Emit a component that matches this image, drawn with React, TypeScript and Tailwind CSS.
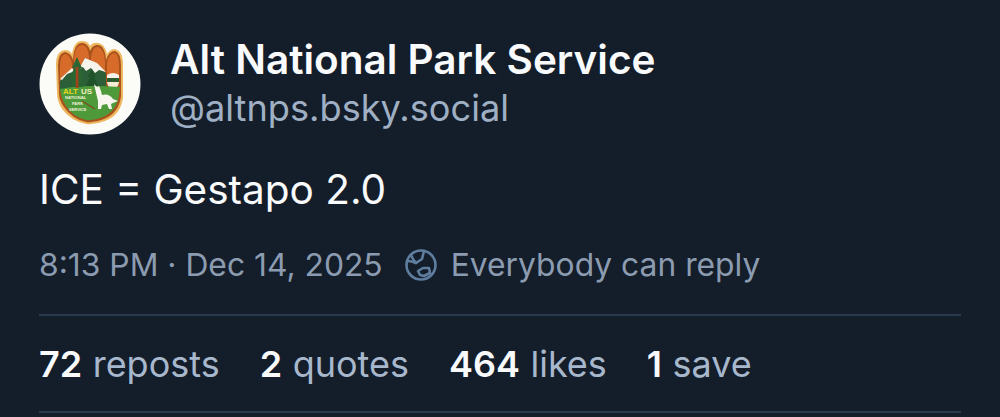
import React from "react";

const Avatar = () => (
    <svg viewBox="0 0 102 102" className="w-[102px] h-[102px] shrink-0">
        <circle cx="51" cy="51" r="50.5" fill="#fbfbf8" />
        {/* shield outline */}
        <path d="M17 32 Q17 18 26 17 Q31 17 33 21 Q35 8 43 8 Q49 8 51 13 Q54 9 59 10 Q66 11 68 21 Q71 16 76 16 Q84 18 84 32 L84 64 Q82 82 66 88 Q56 92 47 91 Q32 88 23 76 Q18 68 18 60 Z" fill="#eeb65e" />
        <path d="M19 33 Q19 20 26 19 Q32 20 34 27 Q35 10 43 10 Q49 10 51 18 Q54 11 59 12 Q66 13 67 27 Q70 18 76 18 Q82 20 82 33 L82 63 Q80 80 65 86 Q56 90 47 89 Q33 86 25 74 Q20 67 20 60 Z" fill="#a9521c" />
        {/* finger panels */}
        <path d="M21 58 L21 34 Q21 22 26 21 Q32 22 33 32 L33 50 Z" fill="#d66b2a" />
        <path d="M35 50 L35 26 Q36 12 43 12 Q49 12 50 24 L50 50 Z" fill="#d66b2a" />
        <path d="M52 50 L52 24 Q54 13 59 14 Q65 15 66 28 L66 50 Z" fill="#d66b2a" />
        <path d="M68 50 L68 30 Q70 20 76 20 Q80 22 80 33 L80 50 Z" fill="#d66b2a" />
        {/* mountains and snow */}
        <path d="M21 48 L33 36 L39 40 L46 25 L67 40 L67 56 L21 58 Z" fill="#2c5f38" />
        <path d="M21 46 L33 35 L36 38 L28 41 L23 47 Z" fill="#f4f1ea" />
        <path d="M40 36 L46 25 L58 30 L67 39 L60 37 L56 40 L52 35 L47 38 L44 34 Z" fill="#f6f3ec" />
        {/* round window on the right */}
        <path d="M68 43 L80 43 L80 49 Q79 56 74 56 Q69 56 68 49 Z" fill="#f7ecd6" />
        <path d="M68 45 L80 45 L80 49 L68 49 Z" fill="#2d5b2e" />
        <path d="M68 42 Q74 38 80 42 L80 45 L68 45 Z" fill="#f6f3ec" />
        {/* green ground */}
        <path d="M21 56 Q44 51 81 54 L80 62 Q78 78 64 84 Q55 88 47 87 Q34 84 27 73 Q22 66 21 56 Z" fill="#4e9a3a" />
        <path d="M43 68 L56 76" stroke="#7a4a1f" strokeWidth="1.2" />
        {/* trees */}
        <path d="M38 24 L43 35 L41 35 L45 45 L42 45 L44 54 L32 54 L34 45 L31 45 L35 35 L33 35 Z" fill="#296632" />
        <rect x="36.8" y="34" width="2.6" height="21" fill="#a3431c" />
        <path d="M53 36 L57 44 L55 44 L59 53 L47 53 L51 44 L49 44 Z" fill="#1f5229" />
        {/* wolf */}
        <path d="M55 51 L58 54 L60 53 L62 58 L63 62 Q70 60 74 66 L79 68 L74 70 L72 71 L73 76 L70 76 L68 71 L63 72 L62 76 L59 76 L59 68 Q57 60 55 51 Z" fill="#f8f6ee" />
        {/* badge lettering */}
        <text x="24" y="61" fontFamily="Liberation Sans, sans-serif" fontSize="8" fontWeight="700" fill="#e7d51d">ALT</text>
        <text x="42" y="61" fontFamily="Liberation Sans, sans-serif" fontSize="8" fontWeight="700" fill="#f3efc0">US</text>
        <text x="26" y="66" fontFamily="Liberation Sans, sans-serif" fontSize="4.2" fontWeight="700" fill="#eef3df">NATIONAL</text>
        <text x="33" y="72" fontFamily="Liberation Sans, sans-serif" fontSize="4" fontWeight="700" fill="#eef3df">PARK</text>
        <text x="30" y="78" fontFamily="Liberation Sans, sans-serif" fontSize="4" fontWeight="700" fill="#eef3df">SERVICE</text>
    </svg>
);

const EarthIcon = () => (
    <svg viewBox="0 0 34 34" fill="none" stroke="#5f7d9e" strokeWidth="2.6" strokeLinejoin="round" strokeLinecap="round" className="w-[34px] h-[34px] shrink-0">
        <circle cx="17" cy="17" r="14.5" />
        <path d="M7 7 Q9 12 12 15 L18 11 L20 3" />
        <path d="M3 13 Q8 13 12 15" />
        <path d="M14 23 L19 20 L25 20 L26 25 L20 28 L16 27 Z" />
    </svg>
);

const Stat = ({count, label}: { count: string; label: string }) => (
    <div className="flex gap-[10.5px]">
        <span className="font-semibold text-[#f8fafc]">{count}</span>
        <span className="text-[#a8b8cc]">{label}</span>
    </div>
);

export default function App() {
    return (
        <div className="w-[1000px] h-[417px] overflow-hidden bg-[#141d2a] px-[39px] pt-[33px] font-['Inter',sans-serif]">
            {/* Author */}
            <div className="flex items-center gap-[29px]">
                <Avatar />
                <div className="flex flex-col -mt-[1px]">
                    <span className="text-[40.5px] leading-[49px] font-semibold text-[#f8fafc] whitespace-nowrap">Alt National Park Service</span>
                    <span className="text-[36.2px] leading-[49px] text-[#9fb0c4]">@altnps.bsky.social</span>
                </div>
            </div>

            {/* Post */}
            <p className="mt-[27px] text-[40.5px] leading-[56px] text-[#f8fafc]">ICE = Gestapo 2.0</p>

            {/* Meta */}
            <div className="mt-[25px] flex items-center text-[31.8px] leading-[44px] text-[#8c9cb0]">
                <span>8:13 PM · Dec 14, 2025</span>
                <span className="ml-[21px]"><EarthIcon /></span>
                <span className="ml-[13px]">Everybody can reply</span>
            </div>

            <div className="mt-[27px] h-[2px] bg-[#2a3a4e]" />

            {/* Stats */}
            <div className="flex gap-[40px] pt-[26px] pb-[25px] text-[36px] leading-[44px]">
                <Stat count="72" label="reposts" />
                <Stat count="2" label="quotes" />
                <Stat count="464" label="likes" />
                <Stat count="1" label="save" />
            </div>

            <div className="h-[2px] bg-[#2a3a4e]" />
        </div>
    );
}
